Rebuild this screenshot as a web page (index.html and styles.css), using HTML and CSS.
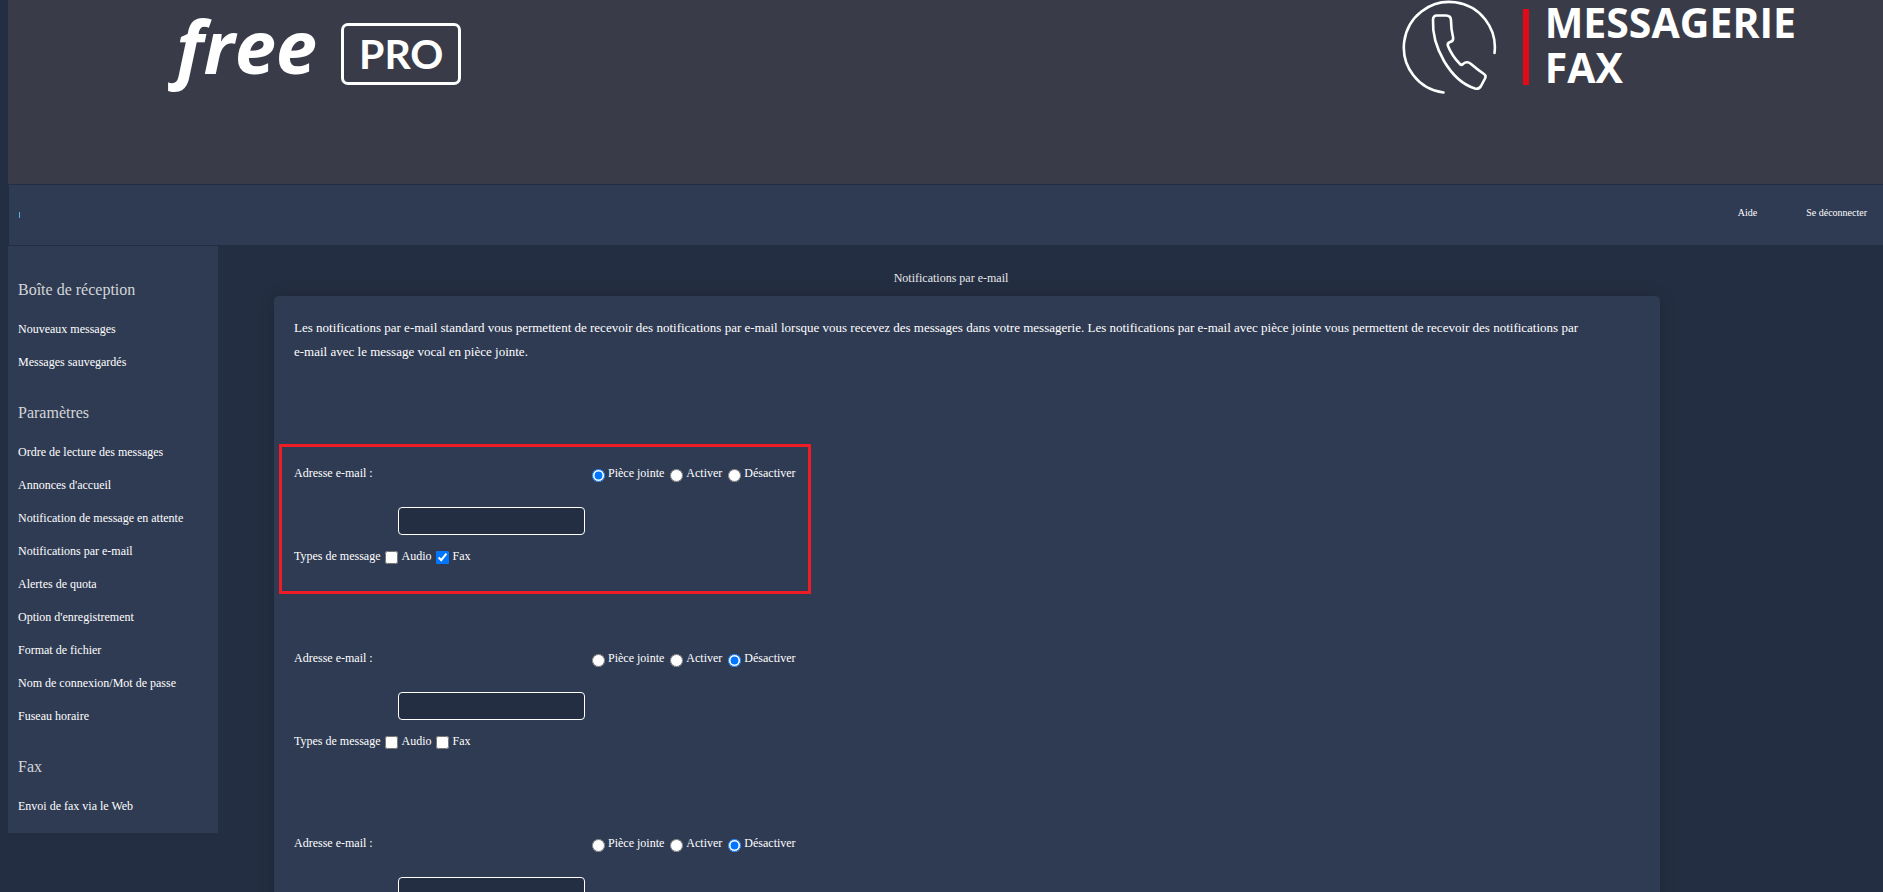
FILE: index.html
```
<!DOCTYPE html>
<html lang="fr">
<head>
  <meta charset="UTF-8">
  <meta name="viewport" content="width=device-width, initial-scale=1.0">
  <title>Notifications par e-mail</title>
  <link rel="stylesheet" href="styles.css">
</head>
<body>
<header class="banner">
  <div class="logo">
    <span class="logo-free">free</span>
    <span class="logo-pro">PRO</span>
  </div>
  <div class="product">
    <svg class="phone" width="96" height="96" viewBox="0 0 96 96" fill="none" stroke="#fff" stroke-width="2.6" stroke-linecap="round" stroke-linejoin="round">
      <path d="M93.500 53A45.500 45.500 0 1 0 42.500 92.500"/>
      <path d="M36 15.500H45Q50 15.500 50 20.500Q50 29 52 37Q53 41 49 42Q46 43 47 46Q51 56 59 64Q60.500 65.500 62 64Q66 60.500 70 64Q77 70 83 74Q85.500 75.500 84 78.500L80 86Q78 89.500 74 88.500Q56 83 43 61Q31 40 32 20Q32 15.500 36 15.500Z"/>
    </svg>
    <span class="product-bar"></span>
    <div class="product-name">MESSAGERIE<br>FAX</div>
  </div>
</header>

<nav class="topbar">
  <span class="user-mark"></span>
  <div class="topbar-links">
    <a href="#">Aide</a>
    <a href="#">Se déconnecter</a>
  </div>
</nav>

<div class="page">
  <aside class="sidebar">
    <h2>Boîte de réception</h2>
    <ul>
      <li><a href="#">Nouveaux messages</a></li>
      <li><a href="#">Messages sauvegardés</a></li>
    </ul>
    <h2>Paramètres</h2>
    <ul>
      <li><a href="#">Ordre de lecture des messages</a></li>
      <li><a href="#">Annonces d'accueil</a></li>
      <li><a href="#">Notification de message en attente</a></li>
      <li><a href="#">Notifications par e-mail</a></li>
      <li><a href="#">Alertes de quota</a></li>
      <li><a href="#">Option d'enregistrement</a></li>
      <li><a href="#">Format de fichier</a></li>
      <li><a href="#">Nom de connexion/Mot de passe</a></li>
      <li><a href="#">Fuseau horaire</a></li>
    </ul>
    <h2>Fax</h2>
    <ul>
      <li><a href="#">Envoi de fax via le Web</a></li>
    </ul>
  </aside>

  <main class="content">
    <h1>Notifications par e-mail</h1>
    <form class="card">
      <p>Les notifications par e-mail standard vous permettent de recevoir des notifications par e-mail lorsque vous recevez des messages dans votre messagerie. Les notifications par e-mail avec pièce jointe vous permettent de recevoir des notifications par<br>
      e-mail avec le message vocal en pièce jointe.</p>

      <div class="address highlight">
        <label class="address-label" for="email1">Adresse e-mail :</label>
        <div class="modes">
          <label><input type="radio" name="mode1" checked>Pièce jointe</label>
          <label><input type="radio" name="mode1">Activer</label>
          <label><input type="radio" name="mode1">Désactiver</label>
        </div>
        <input class="email" type="text" id="email1" name="email1">
        <div class="types">
          <span>Types de message</span>
          <label><input type="checkbox" name="audio1">Audio</label>
          <label><input type="checkbox" name="fax1" checked>Fax</label>
        </div>
      </div>

      <div class="address">
        <label class="address-label" for="email2">Adresse e-mail :</label>
        <div class="modes">
          <label><input type="radio" name="mode2">Pièce jointe</label>
          <label><input type="radio" name="mode2">Activer</label>
          <label><input type="radio" name="mode2" checked>Désactiver</label>
        </div>
        <input class="email" type="text" id="email2" name="email2">
        <div class="types">
          <span>Types de message</span>
          <label><input type="checkbox" name="audio2">Audio</label>
          <label><input type="checkbox" name="fax2">Fax</label>
        </div>
      </div>

      <div class="address">
        <label class="address-label" for="email3">Adresse e-mail :</label>
        <div class="modes">
          <label><input type="radio" name="mode3">Pièce jointe</label>
          <label><input type="radio" name="mode3">Activer</label>
          <label><input type="radio" name="mode3" checked>Désactiver</label>
        </div>
        <input class="email" type="text" id="email3" name="email3">
        <div class="types">
          <span>Types de message</span>
          <label><input type="checkbox" name="audio3">Audio</label>
          <label><input type="checkbox" name="fax3">Fax</label>
        </div>
      </div>
    </form>
  </main>
</div>
</body>
</html>
```
FILE: styles.css
```
* {
  box-sizing: border-box;
}
body {
  margin: 0;
  padding-left: 8px;
  background-color: #242e42;
  color: #fff;
  font-family: "Liberation Serif", "Times New Roman", serif;
  font-size: 12px;
}
a {
  color: #fff;
  text-decoration: none;
}
a:hover {
  text-decoration: underline;
}

/* banner */
.banner {
  display: flex;
  justify-content: space-between;
  align-items: flex-start;
  height: 184px;
  padding: 0 87px 0 160px;
  background-color: #393c48;
}
.logo {
  display: flex;
  align-items: flex-start;
  gap: 16px;
  padding-top: 23px;
}
.logo-free {
  width: 157px;
  font-family: "Open Sans", sans-serif;
  font-size: 74px;
  font-weight: bold;
  font-style: italic;
  line-height: 46px;
  text-align: center;
}
.logo-pro {
  height: 62px;
  padding: 0 15px;
  border: 3px solid #fff;
  border-radius: 7px;
  font-family: Lato, sans-serif;
  font-size: 41px;
  font-weight: bold;
  line-height: 56px;
}
.product {
  display: flex;
  align-items: flex-start;
}
.phone {
  margin-right: 26px;
}
.product-bar {
  width: 6px;
  height: 76px;
  margin: 9px 16px 0 0;
  background-color: #e20a17;
}
.product-name {
  font-family: "Open Sans", sans-serif;
  font-size: 41px;
  font-weight: bold;
  line-height: 45px;
}

/* top bar */
.topbar {
  display: flex;
  justify-content: space-between;
  align-items: center;
  height: 60px;
  margin: 1px 0 1px 1px;
  padding: 0 16px 0 10px;
  background-color: #2f3b53;
}
.user-mark {
  width: 1px;
  height: 6px;
  background-color: #4fb4ea;
}
.topbar-links {
  display: flex;
  gap: 49px;
  padding-bottom: 5px;
  font-size: 10px;
}

.page {
  display: flex;
  align-items: flex-start;
}

/* sidebar */
.sidebar {
  flex: none;
  width: 210px;
  padding: 10px;
  background-color: #2f3b53;
}
.sidebar h2 {
  margin: 0;
  padding: 22px 0 11px;
  color: #d3d6d8;
  font-size: 16px;
  font-weight: normal;
  line-height: 24px;
}
.sidebar ul {
  margin: 0;
  padding: 0;
  list-style: none;
}
.sidebar li {
  line-height: 33px;
}

/* content */
.content {
  flex: 1;
  padding: 20px 223px 0 56px;
}
h1 {
  margin: 0 32px 6px 0;
  color: #e6e8ea;
  font-size: 12px;
  font-weight: normal;
  line-height: 24px;
  text-align: center;
}
.card {
  padding: 20px 5px 0;
  border-radius: 5px;
  background-color: #2f3b53;
  box-shadow: 0 0 16px rgba(0, 0, 0, 0.15);
}
.card p {
  margin: 0 15px 80px;
  font-size: 13px;
  line-height: 24px;
}
.address {
  display: grid;
  grid-template-columns: 104px 187px auto;
  width: fit-content;
  margin-bottom: 35px;
  padding: 14px 12px 23px;
  border: 3px solid transparent;
  line-height: 24px;
}
.highlight {
  border-color: #ee1c24;
}
.address-label {
  grid-column: 1 / 3;
}
.modes {
  display: flex;
  gap: 6px;
  height: 24px;
  padding-left: 7px;
}
.types {
  display: flex;
  grid-column: 1 / 4;
  gap: 5px;
}
.email {
  grid-column: 2;
  height: 28px;
  margin: 22px 0 9px;
  padding: 4px 8px;
  border: 1px solid #fff;
  border-radius: 4px;
  background-color: #242e42;
  color: #fff;
  font: inherit;
}
.modes input, .types input {
  width: 13px;
  height: 13px;
  margin: 0 3px 0 0;
}
.modes input {
  vertical-align: -5px;
}
.types input {
  vertical-align: -4px;
}
```
